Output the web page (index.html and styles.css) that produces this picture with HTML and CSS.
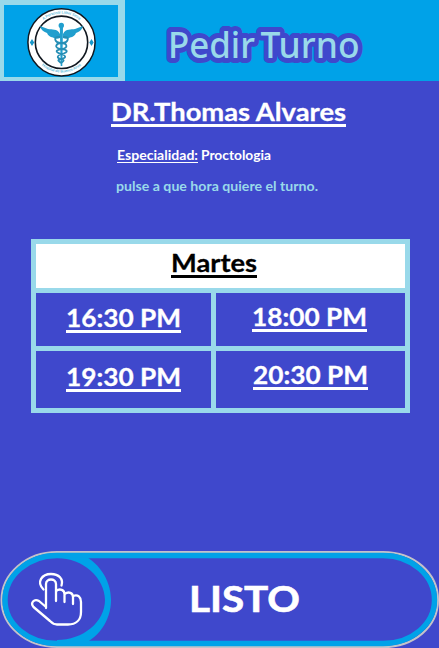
FILE: index.html
```html
<!DOCTYPE html>
<html lang="es">
<head>
<meta charset="utf-8">
<title>Pedir Turno</title>
<link rel="stylesheet" href="styles.css">
</head>
<body>
<header class="header">
  <div class="logo">
    <svg width="114" height="72" viewBox="4 5 114 72">
      <defs>
        <path id="arc-top" d="M33 42A28.500 28.500 0 0 1 90 42"/>
        <path id="arc-bottom" d="M31 42A30.500 30.500 0 0 0 92 42"/>
      </defs>
      <ellipse cx="61.5" cy="42.3" rx="33.6" ry="33.6" fill="#fff" stroke="#111820" stroke-width="1.5"/>
      <circle cx="61.5" cy="42.3" r="26.2" fill="#fff" stroke="#111820" stroke-width="1.6"/>
      <path d="M32 39l2.2 3.5L32 46l-2.2-3.5zM91.500 39l2.200 3.500-2.200 3.500-2.200-3.500z" fill="#1697ca"/>
      <text class="seal"><textPath href="#arc-top" startOffset="50%">A Personal Label Store</textPath></text>
      <text class="seal"><textPath href="#arc-bottom" startOffset="50%">Hospital de Buenos Aires</textPath></text>
      <g fill="#219fce">
        <circle cx="61.300" cy="25.500" r="2.700"/>
        <path d="M60 34C57 28 52 30 48 29L40 26C41 30 44 32 47 33C48 35.500 50 37 53 37.500C55 39 58 39 60 38zM63 34C66 28 71 30 75 29L83 26C82 30 79 32 76 33C75 35.500 73 37 70 37.500C68 39 65 39 63 38z"/>
        <path d="M59.800 27h3.200L62.300 66h-1.600z"/>
      </g>
      <path d="M60 37C52 36 55 43 61 43S69 48 62 49S55 52 61 54S66 58 61 59S59 61 61 63M63 37C71 36 68 43 62 43S53 48 61 49S68 52 62 54S57 58 61 59S64 61 61 63" fill="none" stroke="#268eb5" stroke-width="1.800"/>
    </svg>
  </div>
  <svg class="title" width="220" height="70" viewBox="150 10 220 70">
    <text x="168" y="58" textLength="87" lengthAdjust="spacingAndGlyphs">Pedir</text>
    <text x="260.500" y="58" textLength="99" lengthAdjust="spacingAndGlyphs">Turno</text>
  </svg>
</header>
<main>
  <h1 class="doctor"><svg width="236" height="36"><text x="0" y="27" textLength="235" lengthAdjust="spacingAndGlyphs">DR.Thomas Alvares</text><path d="M0 30h235v3H0z"/></svg></h1>
  <p class="specialty"><svg width="160" height="20"><text x="0" y="14" textLength="81" lengthAdjust="spacingAndGlyphs">Especialidad:</text><path d="M0 16h81v1H0z"/><text x="84" y="14" textLength="70" lengthAdjust="spacingAndGlyphs">Proctologia</text></svg></p>
  <p class="hint"><svg width="210" height="20"><text x="0" y="14" textLength="202" lengthAdjust="spacingAndGlyphs">pulse a que hora quiere el turno.</text></svg></p>
  <section class="schedule">
    <h2 class="day"><svg width="86" height="34"><text x="0" y="24" textLength="86" lengthAdjust="spacingAndGlyphs">Martes</text><path d="M0 27h86v3H0z"/></svg></h2>
    <div class="slot first"><svg width="115" height="34"><text x="0" y="24" textLength="115" lengthAdjust="spacingAndGlyphs">16:30 PM</text><path d="M0 27h115v3H0z"/></svg></div>
    <div class="slot second"><svg width="115" height="34"><text x="0" y="24" textLength="115" lengthAdjust="spacingAndGlyphs">18:00 PM</text><path d="M0 27h115v3H0z"/></svg></div>
    <div class="slot third"><svg width="115" height="34"><text x="0" y="24" textLength="115" lengthAdjust="spacingAndGlyphs">19:30 PM</text><path d="M0 27h115v3H0z"/></svg></div>
    <div class="slot fourth"><svg width="115" height="34"><text x="0" y="24" textLength="115" lengthAdjust="spacingAndGlyphs">20:30 PM</text><path d="M0 27h115v3H0z"/></svg></div>
  </section>
</main>
<button class="done" aria-label="Listo">
  <svg width="439" height="98" viewBox="0 550 439 98">
    <path d="M57 552H383C414 552 438 573 438 600S414 647 383 647H57C26 647 1.500 626 1.500 600S26 552 57 552Z" fill="none" stroke="#c3c3c9" stroke-width="2"/>
    <path d="M57 555.500H383C412 555.500 434.500 576 434.500 600S412 643.500 383 643.500H57C28 643.500 5 624 5 600S28 555.500 57 555.500Z" fill="none" stroke="#00a2e8" stroke-width="5.400"/>
    <path d="M57 553H79C98 561 111 579 111 600S98 639 79 646H57V640C83 640 105 622 105 600S83 558 57 558Z" fill="#00a2e8"/>
    <g fill="none" stroke="#fff" stroke-width="2.300" stroke-linecap="round" stroke-linejoin="round">
      <path d="M43.500 589.500C36 582 42 574 51 574C59 574 63.500 579 61.500 585.500"/>
      <path d="M46 608V584C46 578 56 578 56 584V601M56 591C60 588 64.500 590 64.500 594V602M64.500 594C69 591 73 593 73 597V604M73 596C78 594 81 597 81 602V612C81 620 76 624.500 68 624.500H57C54 624.500 52 623 50 621L33.500 607C30 603 34 598.500 39 601L46 607"/>
    </g>
    <text x="189" y="612" textLength="111" lengthAdjust="spacingAndGlyphs">LISTO</text>
  </svg>
</button>
</body>
</html>
```
FILE: styles.css
```css
* { box-sizing: border-box; }
body {
  margin: 0;
  width: 439px;
  height: 648px;
  overflow: hidden;
  display: flex;
  flex-direction: column;
  background: #3f48cc;
  color: #fff;
  font-family: Lato, "Liberation Sans", sans-serif;
  font-weight: 700;
}
svg { display: block; overflow: visible; fill: currentColor; }
.header { display: flex; height: 81px; flex: none; background: #00a2e8; }
.logo {
  width: 125px;
  border: solid #99d9ea;
  border-width: 5px 7px 4px 4px;
}
.logo svg { overflow: hidden; }
.seal { font: 3.8px "Liberation Sans", sans-serif; fill: #219fce; text-anchor: middle; }
.title { margin: 10px 0 0 25px; }
.title text {
  font: 500 37px "Noto Sans", sans-serif;
  fill: #99d9ea;
  stroke: #3f48cc;
  stroke-width: 10px;
  stroke-linejoin: round;
  paint-order: stroke;
}
main { flex: 1; }
h1, h2, p { margin: 0; }
.doctor { height: 52px; padding: 13px 0 0 111px; font-size: 25.500px; }
.doctor text, .day text, .slot text { stroke: currentColor; stroke-width: 0.3px; }
.specialty { height: 31px; padding: 13px 0 0 117px; font-size: 13px; }
.hint { height: 75px; padding: 13px 0 0 116px; font-size: 13px; color: #99d9ea; }
.schedule {
  width: 379px;
  height: 174px;
  margin-left: 31px;
  padding: 5px;
  display: grid;
  grid-template-columns: 175px 189px;
  grid-template-rows: 44px 53px 57px;
  gap: 5px;
  background: #99d9ea;
}
.day { grid-column: 1 / -1; padding: 4px 0 0 135px; background: #fff; color: #000; font-size: 25.500px; }
.slot { background: #3f48cc; font-size: 25.500px; }
.first { padding: 10px 0 0 30px; }
.second { padding: 9px 0 0 36px; }
.third { padding: 11px 0 0 30px; }
.fourth { padding: 9px 0 0 37px; }
.done { flex: none; display: block; padding: 0; border: 0; background: none; color: #fff; font: 700 36px Lato, sans-serif; }
.done text { stroke: currentColor; stroke-width: 0.6px; }
```
